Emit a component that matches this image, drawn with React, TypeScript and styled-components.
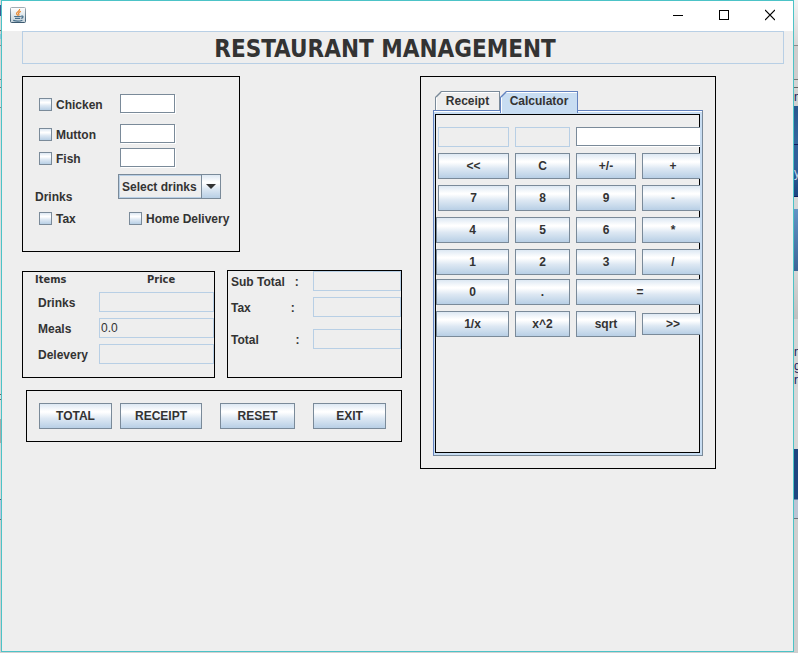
import React, { useState } from "react";
import styled, { createGlobalStyle, css } from "styled-components";

const steel = "#7a8a99";
const sky = "#b8cfe5";
const face = "#eeeeee";
const ink = "#333333";
const metal =
  "linear-gradient(#dde8f3 0%, #ffffff 30%, #ffffff 34%, #dde8f3 60%, #b8cfe5 100%)";

const GlobalStyle = createGlobalStyle`
  * { box-sizing: border-box; }
  body {
    margin: 0;
    background: #d2d1d1;
    color: ${ink};
    font: bold 12px/16px "Liberation Sans", Arial, sans-serif;
  }
  button, input, select { font: inherit; color: inherit; margin: 0; }
`;

const Desktop = styled.div`
  display: grid;
  grid-template-columns: 1px minmax(0, 1fr) 4px;
  min-height: 100vh;
`;

const Strip = styled.div`
  display: flex;
  flex-direction: column;
  overflow: hidden;
`;

const Slice = styled.div<{ $h?: number; $bg: string; $color?: string }>`
  flex: ${(p) => (p.$h ? "none" : "1")};
  height: ${(p) => (p.$h ? `${p.$h}px` : "auto")};
  background: ${(p) => p.$bg};
  color: ${(p) => p.$color ?? "#1a1a5a"};
  font-weight: normal;
  line-height: 14px;
  white-space: nowrap;
  overflow: hidden;
`;

const Window = styled.main`
  display: flex;
  flex-direction: column;
  margin-bottom: 1px;
  border: 1px solid #4cc3c7;
  background: ${face};
`;

const TitleBar = styled.header`
  display: flex;
  align-items: center;
  height: 30px;
  padding: 0 0 2px 8px;
  background: #fff;
`;

const WindowButtons = styled.div`
  display: flex;
  margin-left: auto;
`;

const WindowButton = styled.button`
  display: grid;
  place-items: center;
  width: 46px;
  height: 28px;
  padding: 0;
  border: 0;
  background: none;
`;

const Banner = styled.h1`
  margin: 0 9px 0 20px;
  height: 33px;
  padding: 1px 36px 0 0;
  border: 1px solid ${sky};
  font: bold 24px/32px "DejaVu Sans Condensed", "Noto Sans", sans-serif;
  text-align: center;
`;

const Body = styled.div`
  display: grid;
  grid-template-columns: minmax(0, 380fr) minmax(0, 296fr);
  column-gap: 18px;
  align-items: start;
  padding: 12px 77px 24px 20px;
`;

const LeftColumn = styled.div`
  display: flex;
  flex-direction: column;
`;

const Panel = styled.section`
  border: 1px solid #000;
`;

const OrderPanel = styled(Panel)`
  width: 218px;
  padding: 17px 0 23px 12px;
`;

const OrderRow = styled.div<{ $gap?: number }>`
  display: flex;
  height: 20px;
  padding-left: 4px;
  margin-top: ${(p) => p.$gap ?? 0}px;
`;

const CheckLabel = styled.label<{ $w?: number }>`
  display: flex;
  align-items: center;
  gap: 4px;
  width: ${(p) => (p.$w ? `${p.$w}px` : "auto")};
  height: 21px;
  white-space: nowrap;
`;

const CheckBox = styled.input`
  appearance: none;
  width: 13px;
  height: 13px;
  border: 1px solid ${steel};
  background: ${metal};
  &:checked { box-shadow: inset 0 0 0 3px #fff, inset 0 0 0 9px ${ink}; }
`;

const EditField = styled.input`
  width: 55px;
  height: 19px;
  padding: 0 2px;
  border: 1px solid ${steel};
  box-shadow: 1px 1px 0 #fff;
  background: #fff;
  border-radius: 0;
  font-weight: normal;
`;

const LockedField = styled.input`
  min-width: 0;
  width: 100%;
  height: 20px;
  padding: 0 1px;
  border: 1px solid ${sky};
  border-radius: 0;
  background: ${face};
  font-weight: normal;
`;

const DrinksRow = styled.div`
  display: flex;
  height: 31px;
  margin: 6px 0 3px;
`;

const DrinksLabel = styled.label`
  align-self: flex-end;
  width: 83px;
`;

const Combo = styled.div`
  display: grid;
  grid-template-columns: 1fr 20px;
  width: 103px;
  height: 25px;
`;

const ComboSelect = styled.select`
  grid-area: 1 / 1 / 2 / 3;
  appearance: none;
  padding: 0 0 0 3px;
  border: 1px solid ${steel};
  border-radius: 0;
  background: ${face};
  box-shadow: inset 0 0 0 1px ${sky};
`;

const ComboArrow = styled.span`
  grid-area: 1 / 2;
  display: grid;
  place-items: center;
  border: 1px solid ${steel};
  background: ${metal};
  pointer-events: none;
`;

const Sums = styled.div`
  display: grid;
  grid-template-columns: minmax(0, 193fr) minmax(0, 175fr);
  align-items: end;
  gap: 12px;
  margin: 18px 0 12px;
`;

const ItemsPanel = styled(Panel)`
  height: 107px;
`;

const ItemsHead = styled.div`
  display: grid;
  grid-template-columns: 112px 1fr;
  padding: 0 0 5px 12px;
  font: bold 11px/15px "DejaVu Sans Condensed", "Noto Sans", sans-serif;
`;

const ItemRow = styled.div`
  display: grid;
  grid-template-columns: 61px minmax(0, 1fr);
  align-items: center;
  padding-left: 15px;
  margin-bottom: 6px;
  label { padding-top: 2px; }
`;

const TotalsPanel = styled(Panel)`
  height: 108px;
`;

const TotalRow = styled.div<{ $gap?: number }>`
  display: grid;
  grid-template-columns: 82px minmax(0, 1fr);
  align-items: center;
  padding-left: 3px;
  margin-bottom: ${(p) => p.$gap ?? 0}px;
  label { padding-top: 2px; white-space: pre; }
`;

const ActionsPanel = styled(Panel)`
  display: flex;
  gap: 18px;
  margin-left: 4px;
  padding: 12px;
`;

const Pair = styled.div`
  display: flex;
  gap: 8px;
`;

const MetalButton = styled.button<{ $w?: number }>`
  width: ${(p) => (p.$w ? `${p.$w}px` : "auto")};
  height: 26px;
  padding: 0;
  border: 1px solid ${steel};
  border-radius: 0;
  background: ${metal};
`;

const CalcKey = styled(MetalButton)<{
  $wide?: boolean;
  $inset?: boolean;
  $short?: boolean;
}>`
  ${(p) => p.$wide && css`grid-column: span 2;`}
  ${(p) => p.$inset && css`margin-left: 2px;`}
  ${(p) => p.$short && css`height: 22px; align-self: center;`}
`;

const SidePanel = styled(Panel)`
  padding: 14px 12px 12px;
`;

const TabList = styled.div`
  display: flex;
  padding-left: 2px;
`;

const Tab = styled.button<{ $on: boolean }>`
  display: flex;
  height: ${(p) => (p.$on ? 22 : 19)}px;
  margin-bottom: ${(p) => (p.$on ? -3 : 0)}px;
  padding: 1px 1px 0;
  border: 0;
  background: ${(p) => (p.$on ? "#6382bf" : steel)};
  clip-path: polygon(6px 0, 100% 0, 100% 100%, 0 100%, 0 6px);
  position: relative;
  z-index: ${(p) => (p.$on ? 1 : 0)};
`;

const TabFace = styled.span<{ $on: boolean; $w: number }>`
  width: ${(p) => p.$w}px;
  height: 100%;
  padding-top: 1px;
  text-align: center;
  background: ${(p) => (p.$on ? "#c8ddf2" : face)};
  box-shadow: inset 1px 1px 0 #fff;
  clip-path: polygon(6px 0, 100% 0, 100% 100%, 0 100%, 0 6px);
`;

const TabBody = styled.div`
  height: 346px;
  padding: 3px 2px 2px 1px;
  border: 1px solid ${steel};
  border-top-color: #6382bf;
  border-left-color: #6382bf;
  background: #c8ddf2;
  box-shadow: inset 0 1px 0 #fff;
`;

const CalcFace = styled.div`
  height: 100%;
  padding: 13px 0 0 1px;
  background: ${face};
  box-shadow: inset 0 0 0 1px #000;
  overflow: hidden;
`;

const KeyGrid = styled.div`
  display: grid;
  grid-template-columns: 73fr 55fr 60fr 62fr;
  gap: 6px;
  margin: 0 -4px 4px 0;
`;

const FirstField = styled.div`
  padding-left: 2px;
`;

const Display = styled(EditField)`
  grid-column: span 2;
  width: 100%;
`;

type Key = { t: string; wide?: boolean; inset?: boolean; short?: boolean };

const upperKeys: Key[] = [
  { t: "<<", inset: true }, { t: "C" }, { t: "+/-" }, { t: "+" },
  { t: "7", inset: true }, { t: "8" }, { t: "9" }, { t: "-" },
  { t: "4" }, { t: "5" }, { t: "6" }, { t: "*" },
  { t: "1" }, { t: "2" }, { t: "3" }, { t: "/" },
];
const lowerKeys: Key[] = [
  { t: "0" }, { t: "." }, { t: "=", wide: true },
  { t: "1/x" }, { t: "x^2" }, { t: "sqrt" }, { t: ">>", short: true },
];

const leftSlices: [number, string][] = [
  [5, "#dcdcdc"], [11, "#3d5a94"], [14, "#d8d8d8"], [1, "#666"], [3, "#d0d0d0"],
  [5, "#8fc4d8"], [6, "#d0d0d0"], [1, "#888"], [33, "#d6d6d6"], [1, "#777"],
  [7, "#d6d6d6"], [1, "#777"], [19, "#e0e0e0"], [1, "#888"], [286, "#dcdcdc"],
  [1, "#666"], [4, "#ddd"], [1, "#666"], [19, "#ddd"], [24, "#a8a8a8"],
  [56, "#d8d8d8"], [1, "#4a5a70"], [19, "#b8c4dc"], [1, "#666"],
];

const rightSlices: [number, string, string?, string?][] = [
  [45, "linear-gradient(#f2f2f2, #d8d7d7)"], [1, "#8a8a8a"], [33, "#cfcdcd"],
  [1, "#777"], [7, "#d4d4d4"], [1, "#666"], [2, "#d4d4d4"],
  [16, "#d0d0d0", "n"], [38, "linear-gradient(#28578f, #34689f)"],
  [1, "#101c60"], [21, "#2f609b"], [30, "linear-gradient(#2f609b, #1d4681)", "y", "#c8d4e4"],
  [1, "#101c60"], [12, "#d6d6d6"], [62, "linear-gradient(#6394c6, #3c6598)"],
  [48, "linear-gradient(#d6d6d6, #bfbfbf)"], [26, "#d4d4d4"],
  [14, "#d4d4d4", "n"], [14, "#d4d4d4", "g"], [14, "#d4d4d4", "r"],
  [62, "#d6d6d6"], [50, "#1d4681"], [1, "#6a86b0"], [18, "#bcc4d4"], [1, "#6c727c"],
];

const Keys = ({ keys, press }: { keys: Key[]; press: (t: string) => void }) => (
  <>
    {keys.map((k) => (
      <CalcKey
        key={k.t}
        $wide={k.wide}
        $inset={k.inset}
        $short={k.short}
        onClick={() => press(k.t)}
      >
        {k.t}
      </CalcKey>
    ))}
  </>
);

const JavaIcon = () => (
  <svg width="16" height="16" viewBox="0 0 16 16" aria-hidden="true">
    <defs>
      <linearGradient id="tile" x1="0" y1="0" x2="0" y2="1">
        <stop offset="0" stopColor="#ffffff" />
        <stop offset="1" stopColor="#c4d2da" />
      </linearGradient>
      <linearGradient id="edge" x1="0" y1="0" x2="0" y2="1">
        <stop offset="0" stopColor="#a3adb5" />
        <stop offset="1" stopColor="#3c5a70" />
      </linearGradient>
    </defs>
    <rect x="0.5" y="0.5" width="15" height="15" rx="1" fill="url(#tile)" stroke="url(#edge)" />
    <path d="M9.6 2C10.3 4 6.3 5 6.6 6.6C6.8 7.5 7.6 8 7.8 8.6M10.8 4.4C9.2 5.2 8 6 8.8 7.2C9.2 7.8 8.9 8.3 8.5 8.6" fill="none" stroke="#ea8427" strokeWidth="1.2" />
    <path d="M4.2 9.5H10.8M11 9.2C13.6 8.4 13.8 10.8 11.2 11.3M5 11.4H10.2M3.2 13.4C6 14.2 10 14.2 12.4 13.2" fill="none" stroke="#49708c" strokeWidth="1.2" />
  </svg>
);

export default function App() {
  const [tab, setTab] = useState("Calculator");
  const [value, setValue] = useState("");
  const press = (t: string) => {
    if (t === "C") setValue("");
    else if (/^[0-9.]$/.test(t)) setValue(value + t);
  };

  return (
    <>
      <GlobalStyle />
      <Desktop>
        <Strip aria-hidden="true">
          {leftSlices.map(([h, bg], i) => <Slice key={i} $h={h} $bg={bg} />)}
          <Slice $bg="#cfcfcf" />
        </Strip>
        <Window>
          <TitleBar>
            <JavaIcon />
            <WindowButtons>
              <WindowButton aria-label="Minimize">
                <svg width="10" height="12"><path d="M0 6.5H10" stroke="#000" /></svg>
              </WindowButton>
              <WindowButton aria-label="Maximize">
                <svg width="10" height="12"><rect x="0.5" y="1.5" width="9" height="9" fill="none" stroke="#000" /></svg>
              </WindowButton>
              <WindowButton aria-label="Close">
                <svg width="10" height="12"><path d="M0 1L10 11M10 1L0 11" stroke="#000" strokeWidth="1.2" /></svg>
              </WindowButton>
            </WindowButtons>
          </TitleBar>
          <Banner>RESTAURANT MANAGEMENT</Banner>
          <Body>
            <LeftColumn>
              <OrderPanel>
                {["Chicken", "Mutton", "Fish"].map((name, i) => (
                  <OrderRow key={name} $gap={[0, 10, 4][i]}>
                    <CheckLabel $w={81}>
                      <CheckBox type="checkbox" />
                      {name}
                    </CheckLabel>
                    <EditField type="text" aria-label={`${name} quantity`} />
                  </OrderRow>
                ))}
                <DrinksRow>
                  <DrinksLabel htmlFor="drinks">Drinks</DrinksLabel>
                  <Combo>
                    <ComboSelect id="drinks">
                      <option>Select drinks</option>
                    </ComboSelect>
                    <ComboArrow>
                      <svg width="10" height="5"><path d="M0 0H10L5 5Z" fill={ink} /></svg>
                    </ComboArrow>
                  </Combo>
                </DrinksRow>
                <OrderRow>
                  <CheckLabel $w={90}><CheckBox type="checkbox" />Tax</CheckLabel>
                  <CheckLabel><CheckBox type="checkbox" />Home Delivery</CheckLabel>
                </OrderRow>
              </OrderPanel>

              <Sums>
                <ItemsPanel>
                  <ItemsHead><span>Items</span><span>Price</span></ItemsHead>
                  {[["Drinks", ""], ["Meals", "0.0"], ["Delevery", ""]].map(([name, v]) => (
                    <ItemRow key={name}>
                      <label htmlFor={`price-${name}`}>{name}</label>
                      <LockedField id={`price-${name}`} readOnly value={v} />
                    </ItemRow>
                  ))}
                </ItemsPanel>
                <TotalsPanel>
                  <TotalRow $gap={6}>
                    <label htmlFor="subtotal">{"Sub Total   :"}</label>
                    <LockedField id="subtotal" readOnly />
                  </TotalRow>
                  <TotalRow $gap={12}>
                    <label htmlFor="tax">{"Tax            :"}</label>
                    <LockedField id="tax" readOnly />
                  </TotalRow>
                  <TotalRow>
                    <label htmlFor="total">{"Total           :"}</label>
                    <LockedField id="total" readOnly />
                  </TotalRow>
                </TotalsPanel>
              </Sums>

              <ActionsPanel>
                <Pair>
                  <MetalButton $w={73}>TOTAL</MetalButton>
                  <MetalButton $w={82}>RECEIPT</MetalButton>
                </Pair>
                <MetalButton $w={75}>RESET</MetalButton>
                <MetalButton $w={73}>EXIT</MetalButton>
              </ActionsPanel>
            </LeftColumn>

            <SidePanel>
              <TabList role="tablist">
                {[{ name: "Receipt", w: 63 }, { name: "Calculator", w: 76 }].map(({ name, w }) => (
                  <Tab
                    key={name}
                    role="tab"
                    aria-selected={tab === name}
                    $on={tab === name}
                    onClick={() => setTab(name)}
                  >
                    <TabFace $on={tab === name} $w={w}>{name}</TabFace>
                  </Tab>
                ))}
              </TabList>
              <TabBody role="tabpanel">
                <CalcFace>
                  {tab === "Calculator" && (
                    <>
                      <KeyGrid>
                        <FirstField><LockedField readOnly aria-label="First operand" /></FirstField>
                        <LockedField readOnly aria-label="Operator" />
                        <Display type="text" aria-label="Display" value={value} onChange={(e) => setValue(e.target.value)} />
                        <Keys keys={upperKeys} press={press} />
                      </KeyGrid>
                      <KeyGrid>
                        <Keys keys={lowerKeys} press={press} />
                      </KeyGrid>
                    </>
                  )}
                </CalcFace>
              </TabBody>
            </SidePanel>
          </Body>
        </Window>
        <Strip aria-hidden="true">
          {rightSlices.map(([h, bg, text, color], i) => (
            <Slice key={i} $h={h} $bg={bg} $color={color}>{text}</Slice>
          ))}
          <Slice $bg="#cfcece" />
        </Strip>
      </Desktop>
    </>
  );
}
